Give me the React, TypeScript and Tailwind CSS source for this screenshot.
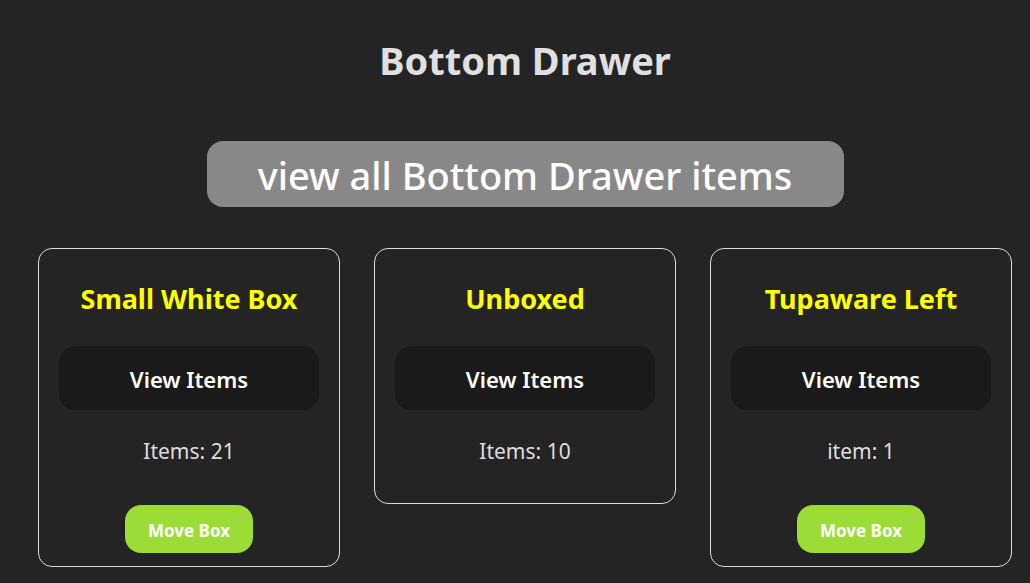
const boxes = [
  { name: 'Small White Box', count: 'Items: 21', movable: true },
  { name: 'Unboxed', count: 'Items: 10', movable: false },
  { name: 'Tupaware Left', count: 'item: 1', movable: true },
]

function BoxCard({ name, count, movable }: { name: string; count: string; movable: boolean }) {
  return (
    <div className="w-[302px] rounded-[14px] border border-[#dcdcdc] px-5 pt-[32px] pb-[13px] flex flex-col items-center">
      <h2 className="text-[27px] leading-[36px] font-bold text-[#ffff00]">{name}</h2>
      <button className="mt-[29px] w-full h-16 pt-[3px] rounded-2xl bg-[#1a1a1a] text-[22px] font-semibold text-white">
        View Items
      </button>
      <p className="mt-[27px] text-[21px] leading-7 text-[#dedede]">{count}</p>
      {movable ? (
        <button className="mt-[40px] w-32 h-12 pt-[3px] rounded-2xl bg-[#9bdd36] text-[17px] font-bold text-white">
          Move Box
        </button>
      ) : (
        <div className="h-[25px]" />
      )}
    </div>
  )
}

export default function App() {
  return (
    <div
      className="min-h-[583px] bg-[#242424] pl-5 flex flex-col items-center"
      style={{ fontFamily: '"Noto Sans", "Open Sans", sans-serif' }}
    >
      <h1 className="mt-[36px] text-[38px] leading-[48px] font-bold text-[#e0e0e0]">Bottom Drawer</h1>
      <button className="mt-[57px] w-[637px] h-[66px] pt-[3px] rounded-2xl bg-[#888888] text-[38px] font-medium text-white">
        view all Bottom Drawer items
      </button>
      <div className="mt-[41px] flex items-start justify-center gap-[34px]">
        {boxes.map((b) => (
          <BoxCard key={b.name} {...b} />
        ))}
      </div>
    </div>
  )
}
